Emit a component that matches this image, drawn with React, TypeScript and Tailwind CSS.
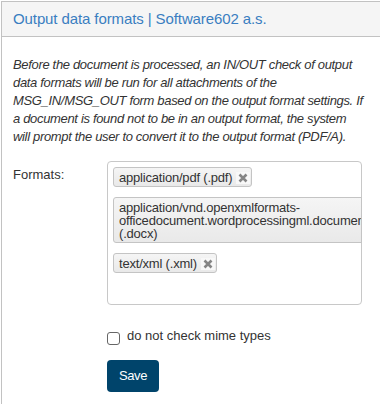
import React from "react";

function XIcon() {
  return (
    <svg width="10" height="10" viewBox="0 0 10 10">
      <path d="M1.5 1.5 L8.5 8.5 M8.5 1.5 L1.5 8.5" stroke="#858585" strokeWidth="2.6" strokeLinecap="butt" />
    </svg>
  );
}

function Tag({ label }: { label: string }) {
  return (
    <div className="flex items-center border border-[#c4c4c4] rounded-[3px] bg-linear-to-b from-[#f5f5f5] to-[#e9e9e9] pl-[5px] pr-[1px] pt-[3px] pb-[2px]">
      <span className="text-[13px] leading-[13px] tracking-[-0.2px] text-[#333] whitespace-nowrap">{label}</span>
      <span className="ml-[4px] flex h-[12px] w-[14px] items-center justify-center bg-[#f8f8f8]">
        <XIcon />
      </span>
    </div>
  );
}

export default function App() {
  return (
    <div className="w-[380px] h-[404px] overflow-hidden bg-white font-['Liberation_Sans',Arial,sans-serif] text-[#333]">
      <div className="ml-px mt-px w-[400px] h-[420px] border-l border-t border-[#c2c2c2]">
        <div className="bg-[#f5f5f5] border-b border-[#c2c2c2] pl-[11px] pt-[7px] pb-[7px]">
          <h2 className="text-[15px] leading-[20px] tracking-[-0.1px] text-[#3a7ec1]">Output data formats | Software602 a.s.</h2>
        </div>
        <div className="pl-[11px] pt-[19px]">
          <p className="w-[368px] whitespace-nowrap italic text-[13px] leading-[18px] tracking-[-0.33px] text-[#333]">
            Before the document is processed, an IN/OUT check of output
            <br />
            data formats will be run for all attachments of the
            <br />
            MSG_IN/MSG_OUT form based on the output format settings. If
            <br />
            a document is found not to be in an output format, the system
            <br />
            will prompt the user to convert it to the output format (PDF/A).
          </p>
          <div className="mt-[15px] flex">
            <label className="w-[94px] pt-[5px] text-[13px] leading-[18px] text-[#333]">Formats:</label>
            <div className="w-[255px] h-[144px] border border-[#c8c8c8] rounded-[4px] bg-white pl-[5px] pt-[5px] flex flex-col items-start gap-[10px]">
              <Tag label="application/pdf (.pdf)" />
              <div className="w-[249px] overflow-hidden border border-[#c4c4c4] rounded-l-[3px] bg-linear-to-b from-[#f5f5f5] to-[#e9e9e9] pl-[5px] pt-[3px] pb-[2px]">
                <span className="block w-[320px] text-[13px] leading-[13px] tracking-[-0.2px] text-[#333]">
                  application/vnd.openxmlformats-
                  <br />
                  officedocument.wordprocessingml.document
                  <br />
                  (.docx)
                </span>
              </div>
              <Tag label="text/xml (.xml)" />
            </div>
          </div>
          <div className="mt-[22px] pl-[94px] flex items-start">
            <span className="mt-[5px] h-[13px] w-[13px] shrink-0 rounded-[3px] border border-[#666] bg-white" />
            <span className="ml-[7px] text-[13px] leading-[18px] text-[#333]">do not check mime types</span>
          </div>
          <div className="mt-[15px] pl-[94px]">
            <button className="h-[32px] w-[52px] rounded-[4px] bg-[#00446b] text-[13px] tracking-[-0.4px] text-white">
              Save
            </button>
          </div>
        </div>
      </div>
    </div>
  );
}
